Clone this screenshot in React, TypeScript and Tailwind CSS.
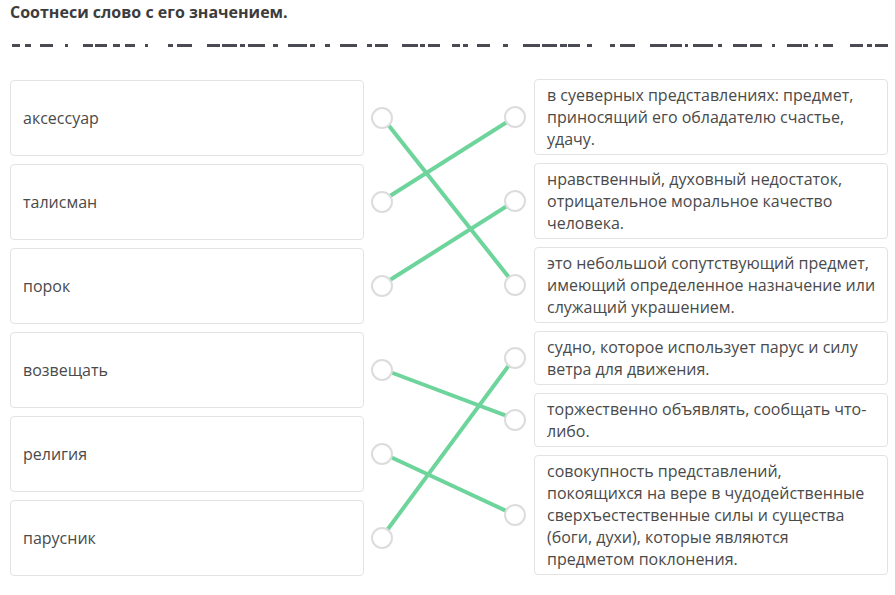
const words = ['аксессуар', 'талисман', 'порок', 'возвещать', 'религия', 'парусник'];

const meanings = [
  'в суеверных представлениях: предмет, приносящий его обладателю счастье, удачу.',
  'нравственный, духовный недостаток, отрицательное моральное качество человека.',
  'это небольшой сопутствующий предмет, имеющий определенное назначение или служащий украшением.',
  'судно, которое использует парус и силу ветра для движения.',
  'торжественно объявлять, сообщать что-либо.',
  'совокупность представлений, покоящихся на вере в чудодейственные сверхъестественные силы и существа (боги, духи), которые являются предметом поклонения.',
];

// left row -> right row
const links: [number, number][] = [
  [117, 285],
  [201, 117],
  [285, 201],
  [369, 419],
  [453, 515],
  [537, 357],
];

// clipped line of text under the title, only the bottoms of glyphs are visible
const dashes: [number, number][] = [
  [12, 20], [25, 31], [40, 53], [65, 68], [83, 93], [95, 107], [113, 120], [125, 135],
  [145, 148], [168, 173], [177, 192], [207, 220], [222, 237], [240, 245], [248, 265],
  [273, 278], [288, 307], [310, 315], [325, 330], [340, 357], [367, 372], [375, 388],
  [402, 418], [420, 425], [428, 440], [452, 460], [463, 468], [477, 490], [503, 508],
  [523, 540], [542, 557], [560, 567], [568, 580], [587, 592], [610, 615], [620, 635],
  [650, 667], [670, 682], [685, 688], [693, 713], [718, 722], [733, 747], [750, 762],
  [772, 775], [787, 802], [803, 808], [815, 818], [823, 833], [850, 863], [867, 872],
  [875, 888],
];

function Circle() {
  return <div className="relative z-10 h-[22px] w-[22px] shrink-0 rounded-full border-2 border-[#dcdcdc] bg-white" />;
}

export default function App() {
  return (
    <div
      className="relative h-[595px] w-[895px] overflow-hidden bg-white"
      style={{ fontFamily: '"Open Sans", "Noto Sans", sans-serif' }}
    >
      <svg className="pointer-events-none absolute left-0 top-0" width={895} height={595}>
        {links.map(([y1, y2], i) => (
          <line key={i} x1={382} y1={y1} x2={515} y2={y2} stroke="#6dd49b" strokeWidth={4} />
        ))}
      </svg>

      <div className="px-[10px] pt-[2px] text-[16px] font-bold leading-5 text-[#3c3c3c]">
        Соотнеси слово с его значением.
      </div>

      <svg className="mt-[22px] block" width={895} height={3}>
        {dashes.map(([a, b], i) => (
          <rect key={i} x={a} y={0} width={b - a} height={3} fill="#4a4b52" />
        ))}
      </svg>

      <div className="mt-[33px] flex pl-[10px]">
        {/* Words */}
        <div className="flex flex-col gap-2">
          {words.map((w) => (
            <div key={w} className="flex items-center">
              <div className="flex h-[76px] w-[354px] items-center rounded border border-[#e3e3e3] bg-white px-3 text-[16px] text-[#4a4a4a]">
                {w}
              </div>
              <div className="ml-[7px]">
                <Circle />
              </div>
            </div>
          ))}
        </div>

        {/* Meanings */}
        <div className="-mt-px ml-[111px] flex flex-col gap-2">
          {meanings.map((m) => (
            <div key={m} className="flex items-center">
              <Circle />
              <div className="ml-[8px] w-[354px] rounded border border-[#e3e3e3] bg-white py-[4px] pl-3 pr-2 text-[16px] leading-[22px] text-[#4a4a4a]">
                {m}
              </div>
            </div>
          ))}
        </div>
      </div>
    </div>
  );
}
